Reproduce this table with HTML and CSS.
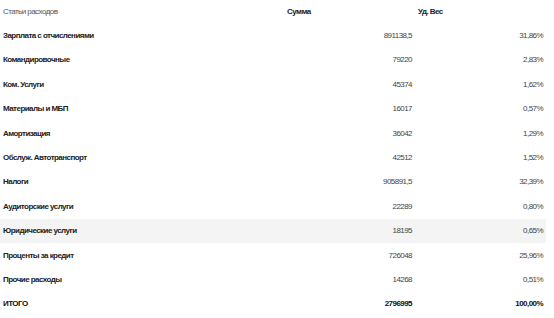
FILE: index.html
```html
<!DOCTYPE html>
<html>
<head>
<meta charset="utf-8">
<link rel="stylesheet" href="styles.css">
</head>
<body>
<table class="report">
  <thead>
    <tr>
      <th class="c-name">Статьи расходов</th>
      <th class="c-sum">Сумма</th>
      <th class="c-pct">Уд. Вес</th>
    </tr>
  </thead>
  <tbody>
    <tr><td class="name">Зарплата с отчислениями</td><td class="num">891138,5</td><td class="num">31,86%</td></tr>
    <tr><td class="name">Командировочные</td><td class="num">79220</td><td class="num">2,83%</td></tr>
    <tr><td class="name">Ком. Услуги</td><td class="num">45374</td><td class="num">1,62%</td></tr>
    <tr><td class="name">Материалы и МБП</td><td class="num">16017</td><td class="num">0,57%</td></tr>
    <tr><td class="name">Амортизация</td><td class="num">36042</td><td class="num">1,29%</td></tr>
    <tr><td class="name">Обслуж. Автотранспорт</td><td class="num">42512</td><td class="num">1,52%</td></tr>
    <tr><td class="name">Налоги</td><td class="num">905891,5</td><td class="num">32,39%</td></tr>
    <tr><td class="name">Аудиторские услуги</td><td class="num">22289</td><td class="num">0,80%</td></tr>
    <tr class="hl"><td class="name">Юридические услуги</td><td class="num">18195</td><td class="num">0,65%</td></tr>
    <tr><td class="name">Проценты за кредит</td><td class="num">726048</td><td class="num">25,96%</td></tr>
    <tr><td class="name">Прочие расходы</td><td class="num">14268</td><td class="num">0,51%</td></tr>
    <tr class="total"><td class="name">ИТОГО</td><td class="num">2796995</td><td class="num">100,00%</td></tr>
  </tbody>
</table>
</body>
</html>
```

FILE: styles.css
```css
html, body {
  margin: 0;
  padding: 0;
  background: #fff;
}
body {
  font-family: "Liberation Sans", Arial, sans-serif;
  font-size: 8px;
  letter-spacing: -0.55px;
  color: #444;
}
.report {
  border-collapse: collapse;
  width: 546px;
  margin-top: -1px;
}
.report th, .report td {
  height: 24.4px;
  padding: 0 3px;
  box-sizing: border-box;
  vertical-align: middle;
  white-space: nowrap;
}
.report th {
  text-align: left;
  font-weight: bold;
  color: #222;
}
.report th.c-name {
  font-weight: normal;
  color: #555;
  width: 284px;
}
.report th.c-sum {
  width: 131px;
}
.report td.name {
  font-weight: bold;
  color: #222;
}
.report td.num {
  text-align: right;
  color: #444;
}
.report tr.hl td {
  background: #f4f4f4;
}
.report tr.total td {
  font-weight: bold;
  color: #111;
}
```
